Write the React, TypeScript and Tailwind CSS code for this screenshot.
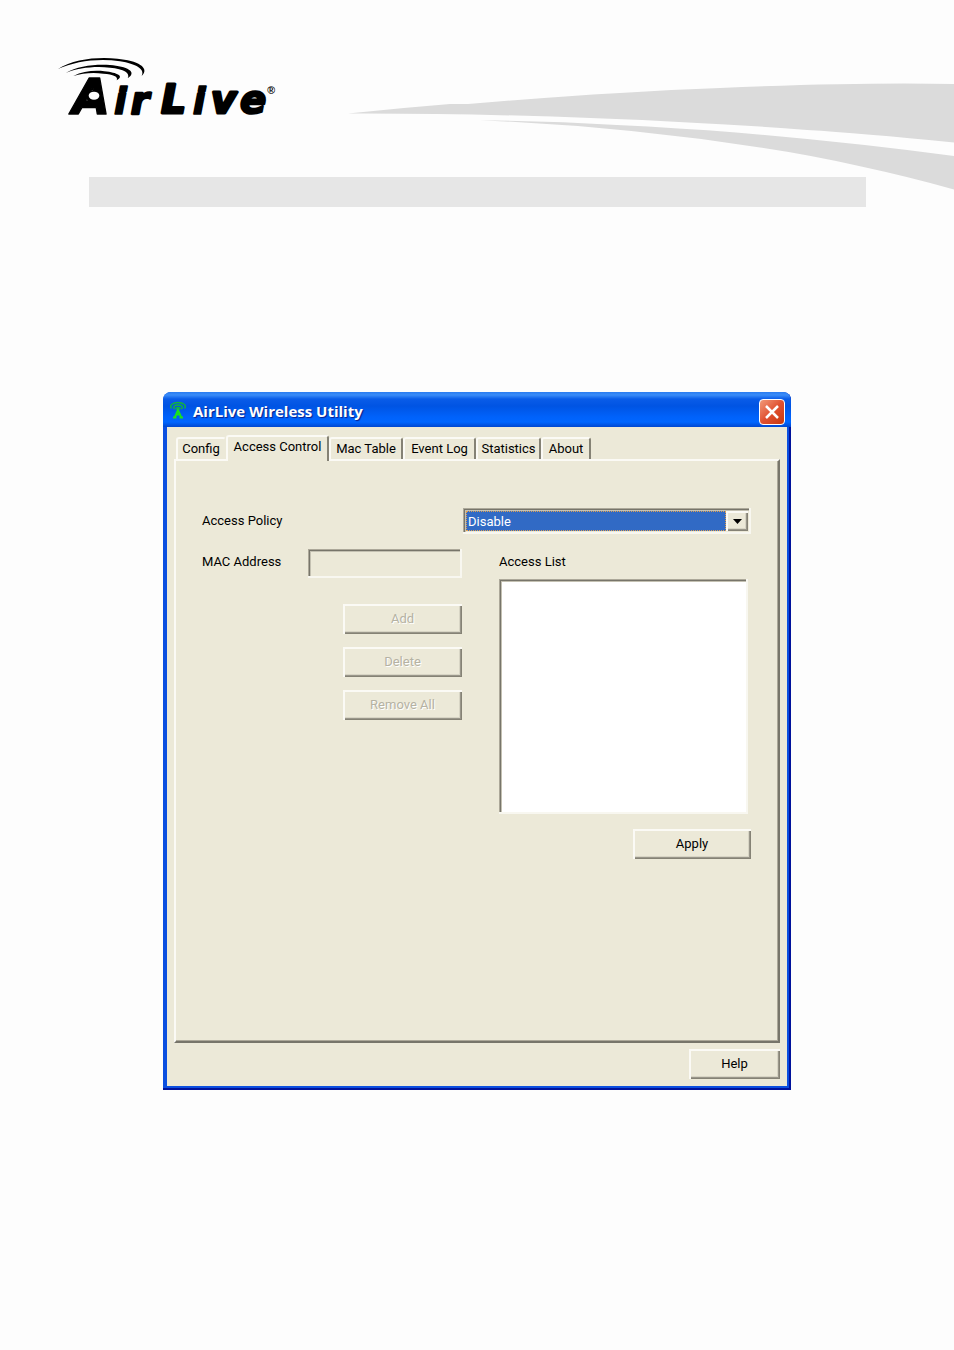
import { useState } from 'react';
import type { ButtonHTMLAttributes } from 'react';
import clsx from 'clsx';

const TABS = [
  { name: 'Config', width: 'w-[50px]' },
  { name: 'Access Control', width: 'w-[103px]' },
  { name: 'Mac Table', width: 'w-[74px]' },
  { name: 'Event Log', width: 'w-[73px]' },
  { name: 'Statistics', width: 'w-[65px]' },
  { name: 'About', width: 'w-[50px]' },
];

const SUNKEN =
  'shadow-[inset_-2px_-2px_0_#f8f7f0,inset_1px_1px_0_#aca899,inset_2px_2px_0_#77756a,inset_3px_3px_0_#c4c1b2]';
const RAISED =
  'shadow-[inset_2px_2px_0_#fbfaf5,inset_-1px_-1px_0_#858275,inset_-2px_-2px_0_#99968a,inset_-3px_-3px_0_#d8d5c5]';

function Logo() {
  return (
    <svg viewBox="0 0 720 225" className="w-60 h-[75px]" role="img" aria-label="Air Live">
      <path d="M24 57C70 27 142 20 202 26C262 31 302 53 275 78C286 57 258 42 210 34C145 24 75 34 24 57Z" />
      <path d="M47 69C82 48 135 42 180 45C230 49 264 65 233 85C242 69 222 57 180 53C132 48 85 54 47 69Z" />
      <path d="M70 78C98 64 133 60 163 64C203 68 224 79 200 91C206 80 190 73 160 71C127 66 97 70 70 78Z" />
      <g
        className="font-['DejaVu_Sans'] font-bold italic"
        stroke="#000"
        strokeLinejoin="round"
      >
        <text x="66" y="191" fontSize="148" strokeWidth="4">A</text>
        <text x="192" y="191" fontSize="112" strokeWidth="5">i</text>
        <text x="242" y="191" fontSize="112" strokeWidth="7">r</text>
        <text x="334" y="190" fontSize="116" strokeWidth="9">L</text>
        <text x="428" y="191" fontSize="112" strokeWidth="5">i</text>
        <text x="483" y="190" fontSize="116" strokeWidth="9">v</text>
        <text x="570" y="190" fontSize="116" strokeWidth="7">e</text>
      </g>
      <ellipse cx="132" cy="140" rx="24" ry="20" />
      <ellipse cx="132" cy="137" rx="16" ry="12" fill="#fdfdfd" />
      <text x="652" y="131" fontSize="32" className="font-['Liberation_Sans'] font-bold">®</text>
    </svg>
  );
}

function Swoosh() {
  return (
    <svg
      viewBox="348 80 606 112"
      className="absolute top-20 right-0 w-[606px] h-28"
      fill="#dbdbdb"
      aria-hidden="true"
    >
      <path d="M348 113.5Q400 108 450 104H468Q610 92 720 88Q860 82 954 84V142.500Q860 133 807 130Q745 125 688 122.500Q510 113 348 113.500Z" />
      <path d="M480 120.300Q550 121 617 125Q680 128 736 132.500Q850 142 954 156V189.500Q910 177 859 166Q810 155 760 147.500Q620 126 480 120.300Z" />
    </svg>
  );
}

function Antenna() {
  return (
    <svg viewBox="0 0 18 18" className="size-[18px]" fill="none" aria-hidden="true">
      <path
        d="M2.500 7.500C0 4 4 1.500 9 1.500S18 4 15.500 7.500M5.500 8C3.500 5.500 6 4 9 4S14.500 5.500 12.500 8M7.500 8.500C6.500 7 8 6.500 9 6.500S11.500 7 10.500 8.500"
        stroke="#14b53c"
        strokeWidth="1.400"
      />
      <path d="M6 16L9 9L12 16M7 13.500H11M4 16.500H7.500M10.500 16.500H14" stroke="#1be41b" strokeWidth="2" />
    </svg>
  );
}

function PushButton({ className, ...props }: ButtonHTMLAttributes<HTMLButtonElement>) {
  return (
    <button
      type="button"
      className={clsx(
        'h-[30px] disabled:text-[#b5b2a3] disabled:[text-shadow:1px_1px_0_#fff]',
        RAISED,
        className,
      )}
      {...props}
    />
  );
}

function AccessControl() {
  const [policy, setPolicy] = useState('Disable');
  const disabled = policy === 'Disable';

  return (
    <div className="pt-[47px] pl-[26px] pr-[27px]">
      <div className="flex items-center justify-between">
        <label htmlFor="policy">Access Policy</label>
        <div className={clsx('flex w-72 h-[26px] p-[3px]', SUNKEN)}>
          <select
            id="policy"
            value={policy}
            onChange={(e) => setPolicy(e.target.value)}
            className="grow h-5 pl-px appearance-none bg-[#316ac5] text-white border border-dotted border-[#e0a050] outline-none"
          >
            <option>Disable</option>
            <option>Accept</option>
            <option>Reject</option>
          </select>
          <span className={clsx('w-[22px] h-5 flex items-center justify-center pointer-events-none', RAISED)}>
            <svg viewBox="0 0 9 5" className="w-[9px] h-[5px]" aria-hidden="true">
              <path d="M0 0H9L4.500 5Z" />
            </svg>
          </span>
        </div>
      </div>

      <div className="mt-[15px] flex gap-[37px]">
        <div className="flex-[260] flex flex-col items-end gap-[13px]">
          <div className="w-full flex justify-between mb-[13px]">
            <label htmlFor="mac" className="leading-[26px]">MAC Address</label>
            <input
              id="mac"
              type="text"
              disabled={disabled}
              className={clsx('w-[154px] h-[29px] px-1.5', SUNKEN)}
            />
          </div>
          <PushButton disabled={disabled} className="w-[119px]">Add</PushButton>
          <PushButton disabled={disabled} className="w-[119px]">Delete</PushButton>
          <PushButton disabled={disabled} className="w-[119px]">Remove All</PushButton>
        </div>

        <div className="flex-[252] flex flex-col">
          <label htmlFor="list" className="leading-[26px] mb-1">Access List</label>
          <select
            id="list"
            multiple
            className={clsx('mr-[3px] h-[235px] bg-white outline-none', SUNKEN)}
          />
          <PushButton className="w-[118px] self-end mt-[15px]">Apply</PushButton>
        </div>
      </div>
    </div>
  );
}

function UtilityWindow() {
  const [active, setActive] = useState('Access Control');

  return (
    <section className="max-w-[628px] mx-auto rounded-t-lg bg-[#0b4fe0] px-1 pb-1 shadow-[inset_-2px_-2px_0_#00139c]">
      <header className="-mx-1 h-[35px] pl-1.5 pr-1.5 flex items-center rounded-t-lg bg-[linear-gradient(#2a7cf0_0,#3a8cf8_3px,#0a5ce8_7px,#0054e3_14px,#0062fb_25px,#0066ff_30px,#0047d0_35px)]">
        <Antenna />
        <h1 className="ml-1.5 mt-1 grow font-['Open_Sans',sans-serif] font-bold text-[15px] text-white [text-shadow:1px_1px_1px_#0a1e8a]">
          AirLive Wireless Utility
        </h1>
        <button
          type="button"
          aria-label="Close"
          className="mt-1 size-[26px] rounded-[4px] border border-white bg-linear-to-br from-[#f09878] via-[#e05030] to-[#c83808] flex items-center justify-center"
        >
          <svg viewBox="0 0 14 14" className="size-3.5" stroke="#fff" strokeWidth="2.500" aria-hidden="true">
            <path d="M1 1L13 13M13 1L1 13" />
          </svg>
        </button>
      </header>

      <div className="bg-[#ece9d8] px-[7px] pt-2 pb-[7px] flex flex-col">
        <div role="tablist" className="flex items-end pl-0.5 relative z-10">
          {TABS.map(({ name, width }) => {
            const selected = name === active;
            return (
              <button
                key={name}
                type="button"
                role="tab"
                aria-selected={selected}
                onClick={() => setActive(name)}
                className={clsx(
                  'rounded-t-[3px] border-t-2 border-t-[#fbfaf5] border-l-2 border-l-[#fbfaf5] border-r-2 border-r-[#858275] whitespace-nowrap',
                  width,
                  selected ? 'h-[26px] -mb-0.5 pb-1 bg-[#ece9d8]' : 'h-[22px]',
                  name === 'Config' && 'border-r-transparent',
                )}
              >
                {name}
              </button>
            );
          })}
        </div>
        <div
          role="tabpanel"
          className="min-h-[584px] border-2 border-t-[#fbfaf5] border-l-[#fbfaf5] border-r-[#77756a] border-b-[#77756a] shadow-[inset_-1px_-1px_0_#aca899]"
        >
          {active === 'Access Control' && <AccessControl />}
        </div>
        <PushButton className="w-[91px] self-end mt-1.5">Help</PushButton>
      </div>
    </section>
  );
}

export default function App() {
  return (
    <div className="min-h-screen bg-[#fdfdfd] text-black font-[Roboto,sans-serif] text-[13px]">
      <div className="relative overflow-hidden pt-[50px]">
        <Swoosh />
        <div className="pl-[50px]">
          <Logo />
        </div>
        <div className="relative mt-[52px] ml-[89px] mr-[88px] h-[30px] bg-[#e6e6e6]" />
      </div>
      <main className="pt-[185px] pb-[260px]">
        <UtilityWindow />
      </main>
    </div>
  );
}
